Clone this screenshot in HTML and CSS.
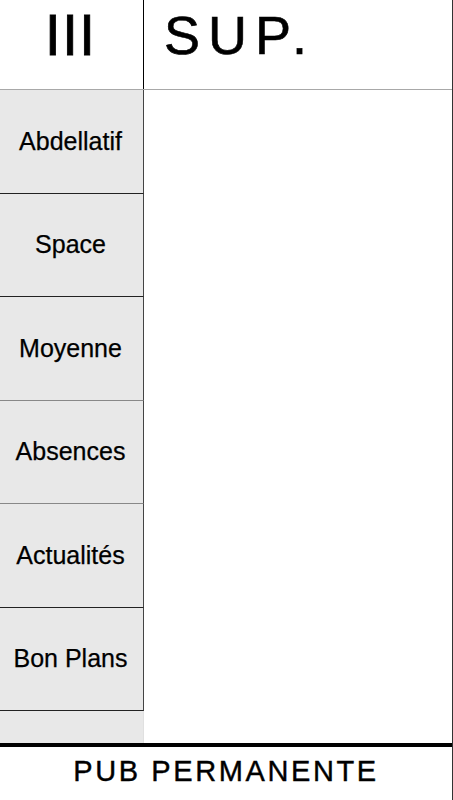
FILE: index.html
```html
<!DOCTYPE html>
<html lang="fr">
<head>
<meta charset="utf-8">
<title>SUP.</title>
<link rel="stylesheet" href="styles.css">
</head>
<body>
<div class="app">
  <header class="topbar">
    <div class="menu">III</div>
    <div class="brand">SUP.</div>
  </header>
  <main class="body">
    <nav class="sidebar">
      <button class="item b-dark">Abdellatif</button>
      <button class="item b-dark">Space</button>
      <button class="item b-gray">Moyenne</button>
      <button class="item b-gray">Absences</button>
      <button class="item b-dark">Actualités</button>
      <button class="item b-dark">Bon Plans</button>
      <div class="spacer"></div>
    </nav>
    <section class="content"></section>
  </main>
  <footer class="pub">PUB PERMANENTE</footer>
</div>
</body>
</html>
```

FILE: styles.css
```css
* { box-sizing: border-box; }
html, body { margin: 0; padding: 0; background: #fff; }
body { font-family: "Liberation Sans", Arial, Helvetica, sans-serif; color: #000; }

.app {
  width: 453px;
  height: 800px;
  display: flex;
  flex-direction: column;
  border-right: 1px solid #333;
}

.topbar {
  height: 90px;
  display: flex;
  border-bottom: 1px solid #a8a8a8;
}
.menu {
  width: 144px;
  border-right: 1px solid #000;
  display: flex;
  align-items: center;
  justify-content: center;
  font-size: 58px;
  letter-spacing: 1px;
  padding-right: 2px;
  padding-bottom: 20px;
  -webkit-text-stroke: 0.8px #000;
}
.brand {
  flex: 1;
  display: flex;
  align-items: center;
  padding-left: 20px;
  padding-bottom: 20px;
  font-size: 54px;
  letter-spacing: 8px;
  -webkit-text-stroke: 0.6px #000;
}

.body {
  flex: 1;
  display: flex;
  min-height: 0;
}
.sidebar {
  width: 144px;
  display: flex;
  flex-direction: column;
  background: #e8e8e8;
}
.item {
  height: 103.5px;
  flex: none;
  margin: 0;
  padding: 0 2px 0 0;
  border: none;
  border-right: 1px solid #444;
  background: #e8e8e8;
  font-family: "Liberation Sans", Arial, Helvetica, sans-serif;
  font-size: 25px;
  color: #000;
  text-align: center;
  -webkit-text-stroke: 0.25px #000;
}
.b-dark { border-bottom: 1px solid #222; }
.b-gray { border-bottom: 1px solid #888; }
.spacer {
  flex: 1;
  border-right: 1px solid #e0e0e0;
}
.content {
  flex: 1;
  background: #fff;
}

.pub {
  height: 57px;
  border-top: 4px solid #000;
  display: flex;
  align-items: center;
  justify-content: center;
  padding-bottom: 4px;
  font-size: 29px;
  letter-spacing: 2.6px;
  -webkit-text-stroke: 0.4px #000;
}
```
